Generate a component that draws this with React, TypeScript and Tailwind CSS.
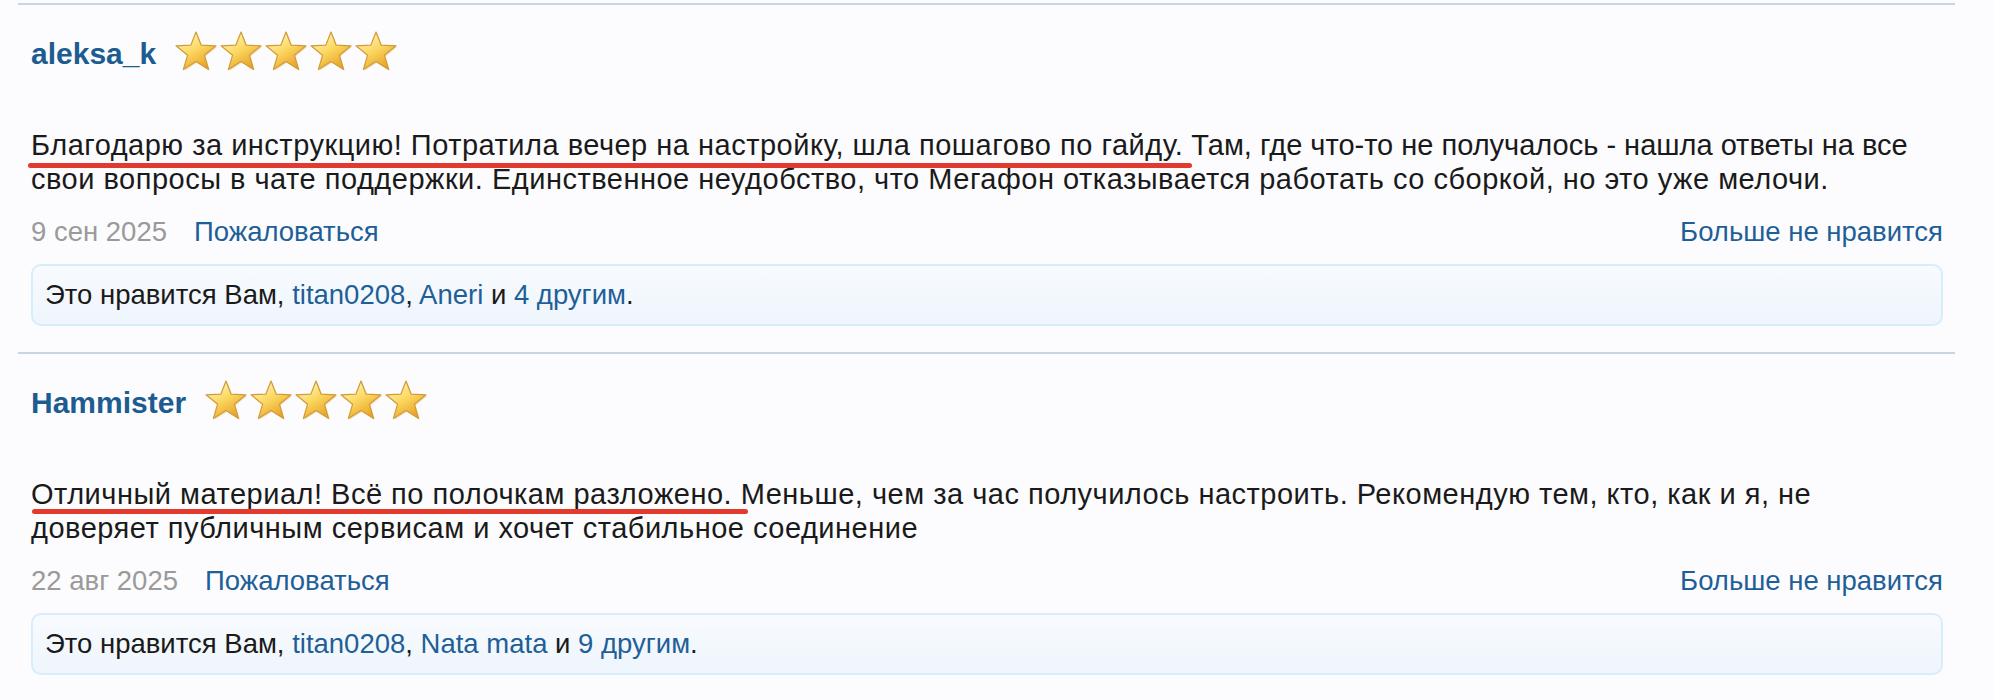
import React from 'react';

type Review = {
  author: string;
  // куски текста; plain = без разрядки
  parts: { t: string; plain?: boolean }[];
  underline: { left: number; width: number; top: number };
  date: string;
  likers: string[];
  others: string;
};

const reviews: Review[] = [
  {
    author: 'aleksa_k',
    parts: [
      { t: 'Благодарю за инструкцию! Потратила вечер на настройку, шла пошагово по гайду.' },
      { t: ' Там, где что-то не получалось - нашла ответы на все', plain: true },
      { t: ' свои вопросы в чате поддержки. Единственное неудобство, что Мегафон отказывается работать со сборкой, но это уже мелочи.' },
    ],
    underline: { left: -3, width: 1164, top: 35 },
    date: '9 сен 2025',
    likers: ['titan0208', 'Aneri'],
    others: '4 другим',
  },
  {
    author: 'Hammister',
    parts: [
      { t: 'Отличный материал! Всё по полочкам разложено.' },
      { t: ' Меньше, чем за час получилось настроить. Рекомендую тем, кто, как и я, не' },
      { t: ' доверяет публичным сервисам и хочет стабильное соединение' },
    ],
    underline: { left: 1, width: 716, top: 32 },
    date: '22 авг 2025',
    likers: ['titan0208', 'Nata mata'],
    others: '9 другим',
  },
];

// одна звезда рейтинга, 42x39
const STAR =
  '21,1 26.2,14.2 41,14.8 29.4,24.2 33.6,38.5 21,30.6 8.4,38.5 12.6,24.2 1,14.8 15.8,14.2';

const Stars: React.FC<{ id: string }> = ({ id }) => (
  <svg width="224" height="40" viewBox="0 0 224 40" className="shrink-0">
    <defs>
      <linearGradient id={id} x1="0.2" y1="0" x2="0.8" y2="1">
        <stop offset="0" stopColor="#fff8c8" />
        <stop offset="0.45" stopColor="#fcd964" />
        <stop offset="1" stopColor="#e39b1c" />
      </linearGradient>
    </defs>
    {[0, 45, 90, 135, 180].map((x) => (
      <g key={x} transform={`translate(${x} 0)`}>
        <polygon points={STAR} transform="translate(1.2 1.2)" fill="#e2c48a" opacity="0.5" />
        <polygon
          points={STAR}
          fill={`url(#${id})`}
          stroke="#d49a35"
          strokeWidth="1.2"
          strokeLinejoin="round"
        />
      </g>
    ))}
  </svg>
);

const ReviewItem: React.FC<{ review: Review; idx: number }> = ({ review, idx }) => (
  <div className="border-t-2 border-[#c8d6e3] pl-[13px] pr-[12px] pt-[26px] pb-[26px]">
    {/* Автор и оценка */}
    <div className="flex h-[40px] items-start">
      <a className="mt-[3px] text-[30px] font-bold leading-[40px] text-[#1c5c91]">{review.author}</a>
      <div className="ml-[19px]">
        <Stars id={`stars-${idx}`} />
      </div>
    </div>

    {/* Текст отзыва */}
    <div className="relative mt-[57px]">
      <p className="text-[29px] leading-[34px] text-[#1a1a1a]">
        {review.parts.map((p, i) => (
          <span key={i} className={p.plain ? '' : 'tracking-[0.5px]'}>
            {p.t}
          </span>
        ))}
      </p>
      <div
        className="absolute h-[5px] rounded-full bg-[#e23a2f]"
        style={{ left: review.underline.left, width: review.underline.width, top: review.underline.top }}
      />
    </div>

    {/* Дата и действия */}
    <div className="mt-[19px] flex items-baseline justify-between text-[27.5px] leading-[34px]">
      <div className="flex items-baseline">
        <span className="text-[#9a9a9a]">{review.date}</span>
        <a className="ml-[27px] text-[#1f5f98]">Пожаловаться</a>
      </div>
      <a className="text-[#1f5f98]">Больше не нравится</a>
    </div>

    {/* Кому нравится */}
    <div className="mt-[15px] flex h-[62px] items-center rounded-[10px] border-2 border-[#d8edfb] bg-gradient-to-b from-[#f8fbfe] to-[#eef5fc] px-[12px] text-[27.5px] leading-[34px] text-[#1a1a1a]">
      <span>
        Это нравится Вам, <a className="text-[#1f5f98]">{review.likers[0]}</a>,{' '}
        <a className="text-[#1f5f98]">{review.likers[1]}</a> и{' '}
        <a className="text-[#1f5f98]">{review.others}</a>.
      </span>
    </div>
  </div>
);

export default function App() {
  return (
    <div className="min-h-screen w-full bg-[#fcfcfe] pt-[3px] pl-[18px] font-['Liberation_Sans',Arial,sans-serif]">
      <div className="w-[1937px]">
        {reviews.map((r, i) => (
          <ReviewItem key={r.author} review={r} idx={i} />
        ))}
        <div className="border-t-2 border-[#c8d6e3]" />
      </div>
    </div>
  );
}
